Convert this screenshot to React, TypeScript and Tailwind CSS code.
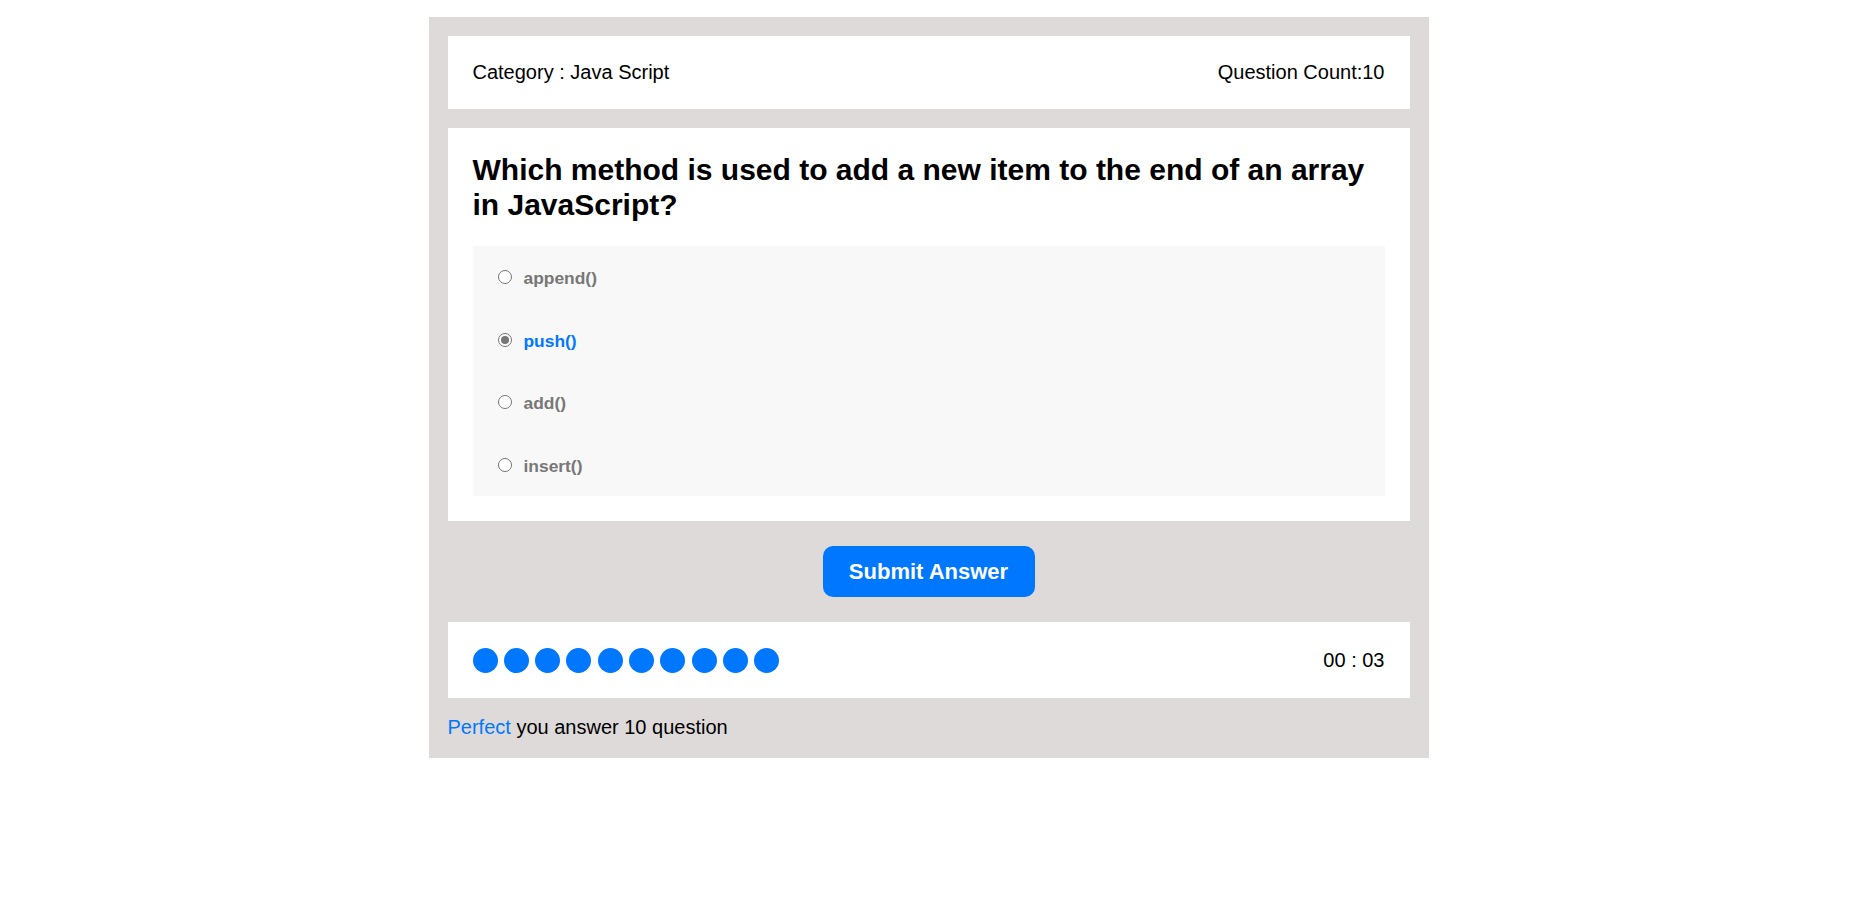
import React from "react";

const options = ["append()", "push()", "add()", "insert()"];
const selected = 1;

function Radio({ checked }: { checked: boolean }) {
  return (
    <span className="flex h-[14px] w-[14px] shrink-0 items-center justify-center rounded-full border border-[#767676] bg-white">
      {checked && <span className="h-[8px] w-[8px] rounded-full bg-[#767676]" />}
    </span>
  );
}

export default function App() {
  return (
    <div className="min-h-screen bg-white pt-[17px] font-['Liberation_Sans',Arial,sans-serif] text-black">
      <div className="mx-auto flex w-[1000px] flex-col bg-[#dedad9] px-[19px] pt-[19px] pb-[19px]">
        <div className="flex items-center justify-between bg-white px-[25px] py-[25px] text-[20px] leading-[23px]">
          <span>Category : Java Script</span>
          <span>Question Count:10</span>
        </div>

        <div className="mt-[19px] bg-white p-[25px]">
          <h2 className="mb-[24px] text-[30px] font-bold leading-[34.5px]">
            Which method is used to add a new item to the end of an array in JavaScript?
          </h2>
          <div className="flex flex-col bg-[#f8f8f8] pl-[25px]">
            {options.map((o, i) => (
              <div key={o} className="flex h-[62.5px] items-center">
                <Radio checked={i === selected} />
                <span
                  className={`ml-[12px] mt-[2px] text-[17.4px] font-bold leading-[20px] ${
                    i === selected ? "text-[#0077ff]" : "text-[#777777]"
                  }`}
                >
                  {o}
                </span>
              </div>
            ))}
          </div>
        </div>

        <div className="flex justify-center py-[25px]">
          <button className="h-[51px] w-[212px] rounded-[10px] bg-[#0077ff] text-[22px] font-bold leading-[25px] text-white">
            Submit Answer
          </button>
        </div>

        <div className="flex h-[76px] items-center justify-between bg-white px-[25px]">
          <div className="flex items-center gap-[6.3px]">
            {Array.from({ length: 10 }).map((_, i) => (
              <span key={i} className="h-[25px] w-[25px] rounded-full bg-[#0077ff]" />
            ))}
          </div>
          <span className="text-[20px] leading-[23px]">00 : 03</span>
        </div>

        <p className="mt-[18px] text-[20px] leading-[23px]">
          <span className="text-[#0077ff]">Perfect</span> you answer 10 question
        </p>
      </div>
    </div>
  );
}
